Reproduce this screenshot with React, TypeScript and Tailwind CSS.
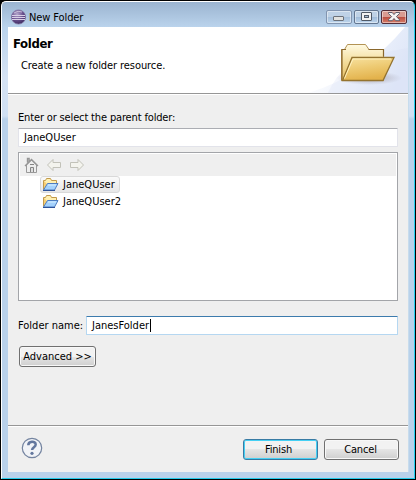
import React from 'react';

function EclipseLogo() {
  return (
    <svg width="16" height="16" viewBox="0 0 16 16" className="shrink-0">
      <defs>
        <radialGradient id="orb" cx="0.4" cy="0.3" r="0.75">
          <stop offset="0" stopColor="#b5a7cc" />
          <stop offset="0.55" stopColor="#694f8e" />
          <stop offset="1" stopColor="#3a285c" />
        </radialGradient>
      </defs>
      <circle cx="7.5" cy="8" r="7.1" fill="url(#orb)" stroke="#80719f" strokeWidth="0.7" />
      <path d="M1 6.5h13M1 8.5h13M1 10.5h13" stroke="#d9cfe6" strokeWidth="1" />
      <path d="M3 4Q7 1 11 3" stroke="#c9bcd9" fill="none" />
    </svg>
  );
}

function WindowButton({ kind }: { kind: 'min' | 'max' | 'close' }) {
  const close = kind === 'close';
  return (
    <div
      className={
        'h-[14px] rounded-[2px] border shadow-[inset_0_0_0_1px_rgba(255,255,255,0.45)] ' +
        (close
          ? 'w-[26px] border-[#522d38] bg-linear-to-b from-[#d99b91] from-50% via-[#b94c40] via-50% to-[#d67d68]'
          : kind === 'min' ? 'w-[26px] border-[#8295b0] bg-linear-to-b from-[#bfd2e6] from-50% via-[#a5bfda] via-50% to-[#bdd5ed]'
          : 'w-[25px] border-[#62758f] bg-linear-to-b from-[#bfd2e6] from-50% via-[#a0bbd8] via-50% to-[#bdd5ed]')
      }
    >
      <svg width="24" height="12" viewBox="0 0 24 12">
        {kind === 'min' && <rect x="6.5" y="5.5" width="10" height="4" rx="0.5" fill="#e2e2df" stroke="#6c7179" />}
        {kind === 'max' && (
          <>
            <rect x="6.5" y="1.5" width="10" height="8" rx="0.5" fill="#f2f2f2" stroke="#505966" />
            <rect x="9.5" y="4.5" width="4" height="2" fill="#a6bad1" stroke="#505966" />
          </>
        )}
        {close && (
          <path d="M6.5 1.5h3.7L12 3.6l1.8-2.1h3.7v1L14.4 5.6l3.1 3.1v1h-3.7L12 7.5l-1.8 2.2H6.5v-1l3.1-3.1-3.1-3.1z" fill="#f7f4f3" stroke="#505363" strokeWidth="0.9" />
        )}
      </svg>
    </div>
  );
}

function BannerFolder() {
  return (
    <svg width="100" height="66" viewBox="0 0 100 66">
      <defs>
        <linearGradient id="sky" x1="0" x2="1" y1="0.2" y2="0.5">
          <stop offset="0.1" stopColor="#fff" />
          <stop offset="1" stopColor="#dfe7f8" />
        </linearGradient>
        <linearGradient id="back" x1="0" x2="0" y1="0" y2="1">
          <stop offset="0" stopColor="#fffae2" />
          <stop offset="0.5" stopColor="#f3dc9a" />
          <stop offset="1" stopColor="#e4bd61" />
        </linearGradient>
        <linearGradient id="front" x1="0" x2="0.3" y1="0" y2="1">
          <stop offset="0" stopColor="#f8e3a3" />
          <stop offset="0.5" stopColor="#eecb74" />
          <stop offset="1" stopColor="#e3b24c" />
        </linearGradient>
        <radialGradient id="shade">
          <stop offset="0" stopColor="#756666" stopOpacity="0.55" />
          <stop offset="1" stopColor="#8b8491" stopOpacity="0" />
        </radialGradient>
      </defs>
      <path d="M0 66Q55 50 97 0h3v66z" fill="url(#sky)" />
      <path d="M40 40Q65 26 100 21v45H20Q28 48 40 40z" fill="#d6e0f6" opacity="0.28" />
      <ellipse cx="61" cy="51" rx="33" ry="7" fill="url(#shade)" />
      <path d="M33.5 53.5v-31h3l3-5h18l3.5 5h14.5v31z" fill="url(#back)" stroke="#b39354" />
      <path d="M34 53.5v-31h4M60.5 22.5h15v7" fill="none" stroke="#8a672c" strokeWidth="1.2" />
      <path d="M44 30.5h42l-11 23H34.5z" fill="url(#front)" stroke="#94732f" strokeWidth="1.3" />
      <path d="M36.5 51.5L45 32h38" fill="none" stroke="#fff2c0" />
    </svg>
  );
}

function TreeFolder() {
  return (
    <svg width="17" height="14" viewBox="0 0 17 14" className="shrink-0">
      <path d="M1.5 11.5v-9h2l1-2h4l1 2h5v4" fill="#fff0b2" stroke="#c29a4b" />
      <path d="M2 3v8l3-5" fill="#f8ce72" />
      <path d="M5.5 5.5h10.5l-3.5 6.5H1.5z" fill="#a5d2fc" stroke="#4d7cc0" />
      <path d="M6 7h8" stroke="#d8f0ff" />
      <path d="M1 12.5h12" stroke="#2d5299" />
    </svg>
  );
}

function ToolbarIcons() {
  return (
    <svg width="72" height="18" viewBox="0 0 72 18">
      <path d="M3.5 8v7.5h10V8L8.5 3z" fill="#eee" stroke="#999" />
      <path d="M2 9l6.5-6.5L15 9M4.5 5.5v-4h1.6v3" fill="none" stroke="#969696" strokeWidth="1.4" />
      <path d="M7.5 15v-4.5h3V15M7 7.5h4" fill="#ddd" stroke="#858585" />
      <path d="M24.5 8l5.5-5.5v3h7.5v5H30v3z" fill="#f4f4ee" stroke="#c2c2b9" />
      <path d="M60.5 8L55 2.5v3h-7.5v5H55v3z" fill="#f4f4ee" stroke="#c2c2b9" />
    </svg>
  );
}

function PushButton({ label, primary, className }: { label: string; primary?: boolean; className: string }) {
  return (
    <button
      className={
        'flex h-[21px] items-center justify-center rounded-[3px] border bg-linear-to-b from-[#f2f2f2] from-50% via-[#e5e5e5] via-50% to-[#cfcfcf] whitespace-nowrap ' +
        (primary ? 'border-[#397ba4] shadow-[inset_0_0_0_1px_#45d0f4] ' : 'border-[#707070] shadow-[inset_0_0_0_1px_#f8f8f8] ') + className
      }
    >
      {label}
    </button>
  );
}

function TreeRow({ name, selected }: { name: string; selected?: boolean }) {
  return (
    <div
      className={
        'flex h-[17px] w-[80px] items-center rounded-[3px] border pl-[1px] whitespace-nowrap ' +
        (selected ? 'border-[#d9d9d9] bg-linear-to-b from-[#fafafa] to-[#e7e7e7]' : 'border-transparent')
      }
    >
      <TreeFolder />
      <span className="ml-[4px] pt-px">{name}</span>
    </div>
  );
}

export default function App() {
  return (
    <div className="h-[480px] w-[416px] overflow-hidden bg-black p-px font-['DejaVu_Sans_Condensed','DejaVu_Sans',sans-serif] text-[11px] leading-[14px] text-black [font-stretch:condensed]">
      <div className="flex h-[478px] w-[414px] flex-col rounded-t-[5px] border border-t-white border-r-[#24d0ef] border-b-[#24c9e9] border-l-white bg-[linear-gradient(to_bottom,#9bb4d0_0px,#bad3ec_25px,#d5e2f3_75px,#d0e0f3_114px,#b9d1ea_117px,#b9d1ea_100%)] pr-[5px] pb-[6px] pl-[6px]">
        <header className="flex h-[25px] shrink-0 items-start">
          <div className="mt-[7px] ml-[3px] flex items-center">
            <EclipseLogo />
            <span className="ml-[2px] pt-[2px] tracking-[-0.1px] whitespace-nowrap">New Folder</span>
          </div>
          <div className="mt-[8px] mr-[2px] ml-auto flex gap-[2px]">
            <WindowButton kind="min" />
            <WindowButton kind="max" />
            <WindowButton kind="close" />
          </div>
        </header>
        <main className="flex h-[445px] w-[401px] shrink-0 flex-col border-r border-[#c7dced] bg-[#efefef]">
          <section className="flex h-[67px] shrink-0 justify-between border-b border-[#969696] bg-white shadow-[0_1px_0_white]">
            <div className="whitespace-nowrap">
              <h1 className="mt-[10px] ml-[5px] text-[13px] font-bold tracking-[-0.35px]">Folder</h1>
              <p className="mt-[8px] ml-[13px] tracking-[-0.08px]">Create a new folder resource.</p>
            </div>
            <BannerFolder />
          </section>
          <p className="mt-[17px] ml-[10px] h-[14px] tracking-[-0.15px] whitespace-nowrap">Enter or select the parent folder:</p>
          <div className="mt-[3px] ml-[10px] flex h-[19px] w-[380px] shrink-0 items-center rounded-[1px] border border-[#e2e3ea] border-t-[#abadb3] bg-white pt-px pl-[5px]">JaneQUser</div>
          <section className="mt-[5px] ml-[10px] h-[149px] w-[380px] shrink-0 border border-[#a3a5a9] bg-white p-px">
            <div className="h-[22px] bg-[#efefef] pt-[3px] pl-[3px]"><ToolbarIcons /></div>
            <div className="ml-[20px]">
              <TreeRow name="JaneQUser" selected />
              <TreeRow name="JaneQUser2" />
            </div>
          </section>
          <div className="mt-[15px] ml-[10px] flex h-[19px] items-center whitespace-nowrap">
            <span className="w-[68px] pt-px">Folder name:</span>
            <div className="flex h-[19px] w-[312px] items-center rounded-[1px] border border-[#b5d7f1] border-t-[#3d7bad] bg-white pl-[5px]">
              <span className="pt-px">JanesFolder</span>
              <span className="ml-px h-[13px] w-px bg-black" />
            </div>
          </div>
          <PushButton label="Advanced >>" className="mt-[11px] ml-[11px] w-[77px] pt-px" />
          <footer className="mt-auto flex h-[47px] shrink-0 items-center border-t border-[#969696] shadow-[inset_0_1px_0_white]">
            <svg width="22" height="22" viewBox="0 0 22 22" className="ml-[13px] -translate-y-px">
              <circle cx="11" cy="11" r="9.7" fill="#f1f3f7" stroke="#7484a0" strokeWidth="1.2" />
              <path d="M7.3 8.3c0-4.6 7.4-4.6 7.4-.8 0 2.8-3.6 2.6-3.6 5.6" fill="none" stroke="#63779e" strokeWidth="2.5" />
              <circle cx="11" cy="16.3" r="1.6" fill="#63779e" />
            </svg>
            <div className="mr-[9px] ml-auto flex gap-[6px]">
              <PushButton label="Finish" primary className="w-[75px] pt-[2px] pr-[4px] tracking-[-0.15px]" />
              <PushButton label="Cancel" className="w-[75px] pt-[2px] pr-[2px] tracking-[-0.15px]" />
            </div>
          </footer>
        </main>
      </div>
    </div>
  );
}
